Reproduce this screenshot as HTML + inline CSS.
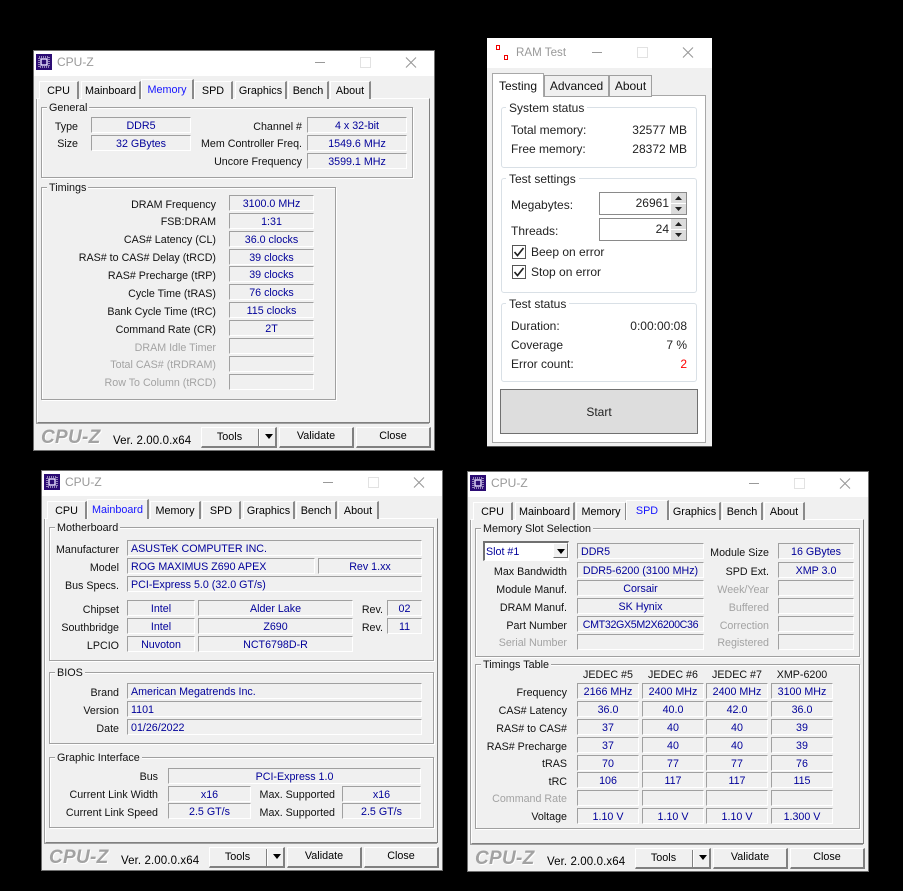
<!DOCTYPE html>
<html><head><meta charset="utf-8"><style>
html,body{margin:0;padding:0;background:#000;width:903px;height:891px;overflow:hidden}
body{position:relative;font:10.7px "Liberation Sans",sans-serif;color:#000}
.w{position:absolute;width:402px;height:401px;background:#f0f0f0;box-shadow:inset 0 0 0 1px #707070}
.w div,.w svg,.w span{position:absolute}
.tb{left:1px;top:1px;width:400px;height:25px;background:#fff}
.tt{left:24px;top:4px;font-size:12px;line-height:16px;color:#999}
.ic{left:3px;top:4px}
.p{left:4px;top:48px;width:391px;height:323px;border:1px solid #fff;border-right:1px solid #808080;border-bottom:1px solid #808080;background:#f0f0f0;box-shadow:-1px 1px 0 #a0a0a0}
.t{top:31px;height:18px;line-height:18px;text-align:center;background:#f0f0f0;box-sizing:border-box;border-left:1px solid #fff;border-top:1px solid #fff;border-right:2px solid #8a8a8a;font-size:10.8px}
.a{top:29px;height:20px;line-height:20px;color:#1414ff;z-index:2}
.g{box-sizing:border-box;border:1px solid #a0a0a0;box-shadow:1px 1px 0 #fff,inset 1px 1px 0 #fff}
.gt{background:#f0f0f0;padding:0 2px;line-height:15px;height:13px;font-size:10.8px;white-space:nowrap;color:#111}
.f{box-sizing:border-box;height:16px;line-height:16px;border:1px solid;border-color:#a0a0a0 #fff #fff #a0a0a0;text-align:center;color:#00009a;white-space:nowrap;font-size:10.7px;overflow:hidden}
.fl{text-align:left;padding-left:3px}
.l{left:0;height:16px;line-height:18px;text-align:right;white-space:nowrap;color:#111;font-size:10.7px}
.d{color:#a3a3a3}
.b{box-sizing:border-box;top:377px;height:21px;line-height:17px;text-align:center;border:1px solid;border-width:1px 2px 2px 1px;border-color:#fff #808080 #808080 #fff;background:#f0f0f0;font-size:10.8px}
.lg{left:8px;top:377px;font:italic bold 19px/22px "Liberation Sans",sans-serif;color:#a2a2a2;letter-spacing:.3px;text-shadow:1px 1px 0 #fff}
.v{left:80px;top:384px;line-height:14px;font-size:11.5px;white-space:nowrap;letter-spacing:.1px}
.r{position:absolute;font-size:12px;line-height:16px;color:#222;white-space:nowrap}
.rr{text-align:right;width:100px;left:587px}
</style></head><body>

<!-- WINDOW 1 Memory -->
<div class="w" style="left:33px;top:50px">
<div class="tb"></div>
<svg class="ic" width="16" height="16" viewBox="0 0 16 16"><rect width="16" height="16" fill="#2c0c74"/><rect x="3" y="3" width="10" height="10" fill="none" stroke="#fff" stroke-width="1" stroke-dasharray="1 1"/><rect x="5" y="5" width="6" height="6" fill="none" stroke="#e8e0ff" stroke-width="1.4"/></svg>
<div class="tt">CPU-Z</div>
<svg style="left:282px;top:7px" width="102" height="11" viewBox="0 0 102 11"><path d="M0 5.5H10" stroke="#999"/><rect x="45.5" y=".5" width="10" height="10" fill="none" stroke="#e2e2e2"/><path d="M91 .5L101 10.5M101 .5L91 10.5" stroke="#999" stroke-width="1.1"/></svg>
<div class="p"></div>
<div class="t" style="left:6px;width:40px">CPU</div><div class="t" style="left:48px;width:60px">Mainboard</div><div class="t a" style="left:108px;width:53px">Memory</div><div class="t" style="left:161px;width:39px">SPD</div><div class="t" style="left:202px;width:52px">Graphics</div><div class="t" style="left:255px;width:41px">Bench</div><div class="t" style="left:297px;width:41px">About</div>
<div class="g" style="left:8px;top:57px;width:372px;height:71px"></div><div class="gt" style="left:14px;top:51px">General</div>
<div class="f" style="left:58px;top:67px;width:100px">DDR5</div><div class="f" style="left:58px;top:85px;width:100px">32 GBytes</div>
<div class="l" style="width:45px;top:68px">Type</div><div class="l" style="width:45px;top:85px">Size</div>
<div class="l" style="width:269px;top:68px">Channel #</div><div class="l" style="width:269px;top:85px">Mem Controller Freq.</div><div class="l" style="width:269px;top:103px">Uncore Frequency</div>
<div class="f" style="left:274px;top:67px;width:100px">4 x 32-bit</div><div class="f" style="left:274px;top:85px;width:100px">1549.6 MHz</div><div class="f" style="left:274px;top:103px;width:100px">3599.1 MHz</div>
<div class="g" style="left:8px;top:137px;width:295px;height:213px"></div><div class="gt" style="left:14px;top:131px">Timings</div>
<div class="l" style="width:183px;top:146px">DRAM Frequency</div><div class="f" style="left:196px;top:145px;width:85px">3100.0 MHz</div>
<div class="l" style="width:183px;top:163px">FSB:DRAM</div><div class="f" style="left:196px;top:163px;width:85px">1:31</div>
<div class="l" style="width:183px;top:181px">CAS# Latency (CL)</div><div class="f" style="left:196px;top:181px;width:85px">36.0 clocks</div>
<div class="l" style="width:183px;top:199px">RAS# to CAS# Delay (tRCD)</div><div class="f" style="left:196px;top:199px;width:85px">39 clocks</div>
<div class="l" style="width:183px;top:217px">RAS# Precharge (tRP)</div><div class="f" style="left:196px;top:216px;width:85px">39 clocks</div>
<div class="l" style="width:183px;top:235px">Cycle Time (tRAS)</div><div class="f" style="left:196px;top:234px;width:85px">76 clocks</div>
<div class="l" style="width:183px;top:253px">Bank Cycle Time (tRC)</div><div class="f" style="left:196px;top:252px;width:85px">115 clocks</div>
<div class="l" style="width:183px;top:271px">Command Rate (CR)</div><div class="f" style="left:196px;top:270px;width:85px">2T</div>
<div class="l d" style="width:183px;top:289px">DRAM Idle Timer</div><div class="f" style="left:196px;top:288px;width:85px"></div>
<div class="l d" style="width:183px;top:306px">Total CAS# (tRDRAM)</div><div class="f" style="left:196px;top:306px;width:85px"></div>
<div class="l d" style="width:183px;top:324px">Row To Column (tRCD)</div><div class="f" style="left:196px;top:324px;width:85px"></div>
<div class="lg">CPU-Z</div><div class="v">Ver. 2.00.0.x64</div>
<div class="b" style="left:168px;width:76px;line-height:19px;padding-right:18px">Tools</div><div style="left:225px;top:379px;width:1px;height:17px;background:#808080"></div><div style="left:226px;top:379px;width:1px;height:17px;background:#fff"></div><svg style="left:232px;top:384px" width="8" height="5"><path d="M0 0H8L4 5Z" fill="#000"/></svg>
<div class="b" style="left:246px;width:75px">Validate</div><div class="b" style="left:323px;width:75px">Close</div>
</div>

<!-- WINDOW 2 Mainboard -->
<div class="w" style="left:41px;top:470px">
<div class="tb"></div>
<svg class="ic" width="16" height="16" viewBox="0 0 16 16"><rect width="16" height="16" fill="#2c0c74"/><rect x="3" y="3" width="10" height="10" fill="none" stroke="#fff" stroke-width="1" stroke-dasharray="1 1"/><rect x="5" y="5" width="6" height="6" fill="none" stroke="#e8e0ff" stroke-width="1.4"/></svg>
<div class="tt">CPU-Z</div>
<svg style="left:282px;top:7px" width="102" height="11" viewBox="0 0 102 11"><path d="M0 5.5H10" stroke="#999"/><rect x="45.5" y=".5" width="10" height="10" fill="none" stroke="#e2e2e2"/><path d="M91 .5L101 10.5M101 .5L91 10.5" stroke="#999" stroke-width="1.1"/></svg>
<div class="p"></div>
<div class="t" style="left:6px;width:40px">CPU</div><div class="t a" style="left:46px;width:62px">Mainboard</div><div class="t" style="left:109px;width:51px">Memory</div><div class="t" style="left:161px;width:39px">SPD</div><div class="t" style="left:202px;width:52px">Graphics</div><div class="t" style="left:255px;width:41px">Bench</div><div class="t" style="left:297px;width:41px">About</div>
<div class="g" style="left:8px;top:57px;width:385px;height:134px"></div><div class="gt" style="left:14px;top:51px">Motherboard</div>
<div class="l" style="width:78px;top:71px">Manufacturer</div><div class="f fl" style="left:86px;top:70px;width:295px">ASUSTeK COMPUTER INC.</div>
<div class="l" style="width:78px;top:89px">Model</div><div class="f fl" style="left:86px;top:88px;width:188px">ROG MAXIMUS Z690 APEX</div><div class="f" style="left:277px;top:88px;width:104px">Rev 1.xx</div>
<div class="l" style="width:78px;top:107px">Bus Specs.</div><div class="f fl" style="left:86px;top:106px;width:295px">PCI-Express 5.0 (32.0 GT/s)</div>
<div class="l" style="width:78px;top:131px">Chipset</div><div class="f" style="left:86px;top:130px;width:68px">Intel</div><div class="f" style="left:157px;top:130px;width:155px">Alder Lake</div><div class="l" style="width:342px;top:131px">Rev.</div><div class="f" style="left:346px;top:130px;width:35px">02</div>
<div class="l" style="width:78px;top:149px">Southbridge</div><div class="f" style="left:86px;top:148px;width:68px">Intel</div><div class="f" style="left:157px;top:148px;width:155px">Z690</div><div class="l" style="width:342px;top:149px">Rev.</div><div class="f" style="left:346px;top:148px;width:35px">11</div>
<div class="l" style="width:78px;top:167px">LPCIO</div><div class="f" style="left:86px;top:166px;width:68px">Nuvoton</div><div class="f" style="left:157px;top:166px;width:155px">NCT6798D-R</div>
<div class="g" style="left:8px;top:202px;width:385px;height:72px"></div><div class="gt" style="left:14px;top:196px">BIOS</div>
<div class="l" style="width:78px;top:214px">Brand</div><div class="f fl" style="left:86px;top:213px;width:295px">American Megatrends Inc.</div>
<div class="l" style="width:78px;top:232px">Version</div><div class="f fl" style="left:86px;top:231px;width:295px">1101</div>
<div class="l" style="width:78px;top:250px">Date</div><div class="f fl" style="left:86px;top:249px;width:295px">01/26/2022</div>
<div class="g" style="left:8px;top:287px;width:385px;height:71px"></div><div class="gt" style="left:14px;top:281px">Graphic Interface</div>
<div class="l" style="width:117px;top:298px">Bus</div><div class="f" style="left:127px;top:298px;width:253px">PCI-Express 1.0</div>
<div class="l" style="width:117px;top:316px">Current Link Width</div><div class="f" style="left:127px;top:316px;width:83px">x16</div><div class="l" style="width:294px;top:316px">Max. Supported</div><div class="f" style="left:301px;top:316px;width:79px">x16</div>
<div class="l" style="width:117px;top:334px">Current Link Speed</div><div class="f" style="left:127px;top:333px;width:83px">2.5 GT/s</div><div class="l" style="width:294px;top:334px">Max. Supported</div><div class="f" style="left:301px;top:333px;width:79px">2.5 GT/s</div>
<div class="lg">CPU-Z</div><div class="v">Ver. 2.00.0.x64</div>
<div class="b" style="left:168px;width:76px;line-height:19px;padding-right:18px">Tools</div><div style="left:225px;top:379px;width:1px;height:17px;background:#808080"></div><div style="left:226px;top:379px;width:1px;height:17px;background:#fff"></div><svg style="left:232px;top:384px" width="8" height="5"><path d="M0 0H8L4 5Z" fill="#000"/></svg>
<div class="b" style="left:246px;width:75px">Validate</div><div class="b" style="left:323px;width:75px">Close</div>
</div>

<!-- WINDOW 3 SPD -->
<div class="w" style="left:467px;top:471px">
<div class="tb"></div>
<svg class="ic" width="16" height="16" viewBox="0 0 16 16"><rect width="16" height="16" fill="#2c0c74"/><rect x="3" y="3" width="10" height="10" fill="none" stroke="#fff" stroke-width="1" stroke-dasharray="1 1"/><rect x="5" y="5" width="6" height="6" fill="none" stroke="#e8e0ff" stroke-width="1.4"/></svg>
<div class="tt">CPU-Z</div>
<svg style="left:282px;top:7px" width="102" height="11" viewBox="0 0 102 11"><path d="M0 5.5H10" stroke="#999"/><rect x="45.5" y=".5" width="10" height="10" fill="none" stroke="#e2e2e2"/><path d="M91 .5L101 10.5M101 .5L91 10.5" stroke="#999" stroke-width="1.1"/></svg>
<div class="p"></div>
<div class="t" style="left:6px;width:40px">CPU</div><div class="t" style="left:48px;width:60px">Mainboard</div><div class="t" style="left:109px;width:51px">Memory</div><div class="t a" style="left:159px;width:43px">SPD</div><div class="t" style="left:202px;width:52px">Graphics</div><div class="t" style="left:255px;width:41px">Bench</div><div class="t" style="left:297px;width:41px">About</div>
<div class="g" style="left:8px;top:57px;width:385px;height:129px"></div><div class="gt" style="left:14px;top:51px">Memory Slot Selection</div>
<div class="f fl" style="left:16px;top:70px;width:86px;height:20px;line-height:18px;border-width:2px 1px 1px 2px;border-color:#707070 #fff #fff #707070;background:#fff;padding-left:1px">Slot #1</div><div style="left:86px;top:72px;width:15px;height:15px;background:#f0f0f0;box-sizing:border-box;border:1px solid;border-color:#fff #707070 #707070 #fff"></div><svg style="left:90px;top:78px" width="8" height="5"><path d="M0 0H8L4 5Z" fill="#000"/></svg>
<div class="f fl" style="left:110px;top:72px;width:127px">DDR5</div><div class="l" style="width:302px;top:73px">Module Size</div><div class="f" style="left:311px;top:72px;width:76px">16 GBytes</div>
<div class="l" style="width:100px;top:92px">Max Bandwidth</div><div class="f" style="left:110px;top:91px;width:127px">DDR5-6200 (3100 MHz)</div><div class="l" style="width:302px;top:92px">SPD Ext.</div><div class="f" style="left:311px;top:91px;width:76px">XMP 3.0</div>
<div class="l" style="width:100px;top:110px">Module Manuf.</div><div class="f" style="left:110px;top:109px;width:127px">Corsair</div><div class="l d" style="width:302px;top:110px">Week/Year</div><div class="f" style="left:311px;top:109px;width:76px"></div>
<div class="l" style="width:100px;top:128px">DRAM Manuf.</div><div class="f" style="left:110px;top:127px;width:127px">SK Hynix</div><div class="l d" style="width:302px;top:128px">Buffered</div><div class="f" style="left:311px;top:127px;width:76px"></div>
<div class="l" style="width:100px;top:146px">Part Number</div><div class="f" style="left:110px;top:145px;width:127px;letter-spacing:-.35px">CMT32GX5M2X6200C36</div><div class="l d" style="width:302px;top:146px">Correction</div><div class="f" style="left:311px;top:145px;width:76px"></div>
<div class="l d" style="width:100px;top:163px">Serial Number</div><div class="f" style="left:110px;top:163px;width:127px"></div><div class="l d" style="width:302px;top:163px">Registered</div><div class="f" style="left:311px;top:163px;width:76px"></div>
<div class="g" style="left:8px;top:193px;width:385px;height:165px"></div><div class="gt" style="left:14px;top:187px">Timings Table</div>
<div class="l" style="left:110px;width:62px;top:195px;text-align:center">JEDEC #5</div><div class="l" style="left:175px;width:62px;top:195px;text-align:center">JEDEC #6</div><div class="l" style="left:239px;width:62px;top:195px;text-align:center">JEDEC #7</div><div class="l" style="left:304px;width:62px;top:195px;text-align:center">XMP-6200</div>
<div class="l" style="width:100px;top:213px">Frequency</div><div class="f" style="left:110px;top:212px;width:62px">2166 MHz</div><div class="f" style="left:175px;top:212px;width:62px">2400 MHz</div><div class="f" style="left:239px;top:212px;width:62px">2400 MHz</div><div class="f" style="left:304px;top:212px;width:62px">3100 MHz</div>
<div class="l" style="width:100px;top:231px">CAS# Latency</div><div class="f" style="left:110px;top:230px;width:62px">36.0</div><div class="f" style="left:175px;top:230px;width:62px">40.0</div><div class="f" style="left:239px;top:230px;width:62px">42.0</div><div class="f" style="left:304px;top:230px;width:62px">36.0</div>
<div class="l" style="width:100px;top:249px">RAS# to CAS#</div><div class="f" style="left:110px;top:248px;width:62px">37</div><div class="f" style="left:175px;top:248px;width:62px">40</div><div class="f" style="left:239px;top:248px;width:62px">40</div><div class="f" style="left:304px;top:248px;width:62px">39</div>
<div class="l" style="width:100px;top:267px">RAS# Precharge</div><div class="f" style="left:110px;top:266px;width:62px">37</div><div class="f" style="left:175px;top:266px;width:62px">40</div><div class="f" style="left:239px;top:266px;width:62px">40</div><div class="f" style="left:304px;top:266px;width:62px">39</div>
<div class="l" style="width:100px;top:284px">tRAS</div><div class="f" style="left:110px;top:284px;width:62px">70</div><div class="f" style="left:175px;top:284px;width:62px">77</div><div class="f" style="left:239px;top:284px;width:62px">77</div><div class="f" style="left:304px;top:284px;width:62px">76</div>
<div class="l" style="width:100px;top:302px">tRC</div><div class="f" style="left:110px;top:301px;width:62px">106</div><div class="f" style="left:175px;top:301px;width:62px">117</div><div class="f" style="left:239px;top:301px;width:62px">117</div><div class="f" style="left:304px;top:301px;width:62px">115</div>
<div class="l d" style="width:100px;top:319px">Command Rate</div><div class="f" style="left:110px;top:319px;width:62px"></div><div class="f" style="left:175px;top:319px;width:62px"></div><div class="f" style="left:239px;top:319px;width:62px"></div><div class="f" style="left:304px;top:319px;width:62px"></div>
<div class="l" style="width:100px;top:337px">Voltage</div><div class="f" style="left:110px;top:337px;width:62px">1.10 V</div><div class="f" style="left:175px;top:337px;width:62px">1.10 V</div><div class="f" style="left:239px;top:337px;width:62px">1.10 V</div><div class="f" style="left:304px;top:337px;width:62px">1.300 V</div>
<div class="lg">CPU-Z</div><div class="v">Ver. 2.00.0.x64</div>
<div class="b" style="left:168px;width:76px;line-height:19px;padding-right:18px">Tools</div><div style="left:225px;top:379px;width:1px;height:17px;background:#808080"></div><div style="left:226px;top:379px;width:1px;height:17px;background:#fff"></div><svg style="left:232px;top:384px" width="8" height="5"><path d="M0 0H8L4 5Z" fill="#000"/></svg>
<div class="b" style="left:246px;width:75px">Validate</div><div class="b" style="left:323px;width:75px">Close</div>
</div>

<!-- RAM TEST -->
<div style="position:absolute;left:487px;top:38px;width:225px;height:409px;background:#f0f0f0;border-bottom:1px solid #555;box-sizing:border-box"></div>
<div style="position:absolute;left:487px;top:38px;width:225px;height:30px;background:#fff"></div>
<div style="position:absolute;left:496px;top:45px;width:2px;height:3px;border:1px solid #f00000"></div>
<div style="position:absolute;left:504px;top:55px;width:2px;height:3px;border:1px solid #f00000"></div>
<div class="r" style="left:516px;top:45px;color:#999;font-size:11.6px">RAM Test</div>
<svg style="position:absolute;left:592px;top:47px" width="102" height="11" viewBox="0 0 102 11"><path d="M0 5.5H10" stroke="#999"/><rect x="45.5" y=".5" width="10" height="10" fill="none" stroke="#e2e2e2"/><path d="M91 .5L101 10.5M101 .5L91 10.5" stroke="#999" stroke-width="1.1"/></svg>
<div style="position:absolute;left:492px;top:95px;width:214px;height:348px;box-sizing:border-box;background:#fff;border:1px solid #a8a8a8"></div>
<div class="r" style="left:544px;top:75px;width:65px;height:22px;line-height:21px;box-sizing:border-box;text-align:center;background:#f0f0f0;border:1px solid #a0a0a0;color:#111">Advanced</div>
<div class="r" style="left:609px;top:75px;width:43px;height:22px;line-height:21px;box-sizing:border-box;text-align:center;background:#f0f0f0;border:1px solid #a0a0a0;color:#111">About</div>
<div class="r" style="left:492px;top:73px;width:52px;height:24px;line-height:24px;box-sizing:border-box;text-align:center;background:#fff;border:1px solid #a8a8a8;border-bottom:0;color:#111">Testing</div>

<div style="position:absolute;left:501px;top:107px;width:196px;height:61px;box-sizing:border-box;border:1px solid #d9e0e6;border-radius:3px"></div>
<div class="r" style="left:506px;top:100px;background:#fff;padding:0 3px;color:#222">System status</div>
<div class="r" style="left:511px;top:122px">Total memory:</div><div class="r rr" style="top:122px">32577 MB</div>
<div class="r" style="left:511px;top:141px">Free memory:</div><div class="r rr" style="top:141px">28372 MB</div>

<div style="position:absolute;left:501px;top:178px;width:196px;height:115px;box-sizing:border-box;border:1px solid #d9e0e6;border-radius:3px"></div>
<div class="r" style="left:506px;top:171px;background:#fff;padding:0 3px">Test settings</div>
<div class="r" style="left:511px;top:197px">Megabytes:</div>
<div class="r" style="left:511px;top:223px">Threads:</div>
<div class="r" style="left:599px;top:192px;width:88px;height:23px;line-height:20px;box-sizing:border-box;border:1px solid #8a8a8a;padding-right:17px;text-align:right">26961</div>
<div class="r" style="left:599px;top:218px;width:88px;height:23px;line-height:20px;box-sizing:border-box;border:1px solid #8a8a8a;padding-right:17px;text-align:right">24</div>
<svg style="position:absolute;left:671px;top:193px" width="15" height="47" viewBox="0 0 15 47"><rect width="15" height="10" fill="#dcdcdc"/><rect y="11" width="15" height="10" fill="#dcdcdc"/><rect y="26" width="15" height="10" fill="#dcdcdc"/><rect y="37" width="15" height="10" fill="#dcdcdc"/><path d="M7.500 3L11 7H4ZM4 14H11L7.500 18ZM7.500 29L11 33H4ZM4 40H11L7.500 44Z" fill="#222"/></svg>
<svg style="position:absolute;left:512px;top:245px" width="14" height="34" viewBox="0 0 14 34"><rect x=".5" y=".5" width="13" height="13" fill="#fff" stroke="#555"/><rect x=".5" y="20.500" width="13" height="13" fill="#fff" stroke="#555"/><path d="M2.500 7L5.500 10.500L11.500 3M2.500 27L5.500 30.500L11.500 23" fill="none" stroke="#222" stroke-width="1.700"/></svg>
<div class="r" style="left:531px;top:244px">Beep on error</div>
<div class="r" style="left:531px;top:264px">Stop on error</div>

<div style="position:absolute;left:501px;top:303px;width:196px;height:79px;box-sizing:border-box;border:1px solid #d9e0e6;border-radius:3px"></div>
<div class="r" style="left:506px;top:296px;background:#fff;padding:0 3px">Test status</div>
<div class="r" style="left:511px;top:318px">Duration:</div><div class="r rr" style="top:318px">0:00:00:08</div>
<div class="r" style="left:511px;top:337px">Coverage</div><div class="r rr" style="top:337px">7 %</div>
<div class="r" style="left:511px;top:356px">Error count:</div><div class="r rr" style="top:356px;color:#f00">2</div>
<div class="r" style="left:500px;top:389px;width:198px;height:45px;line-height:44px;box-sizing:border-box;background:#ddd;border:1px solid #707070;text-align:center">Start</div>
</body></html>
